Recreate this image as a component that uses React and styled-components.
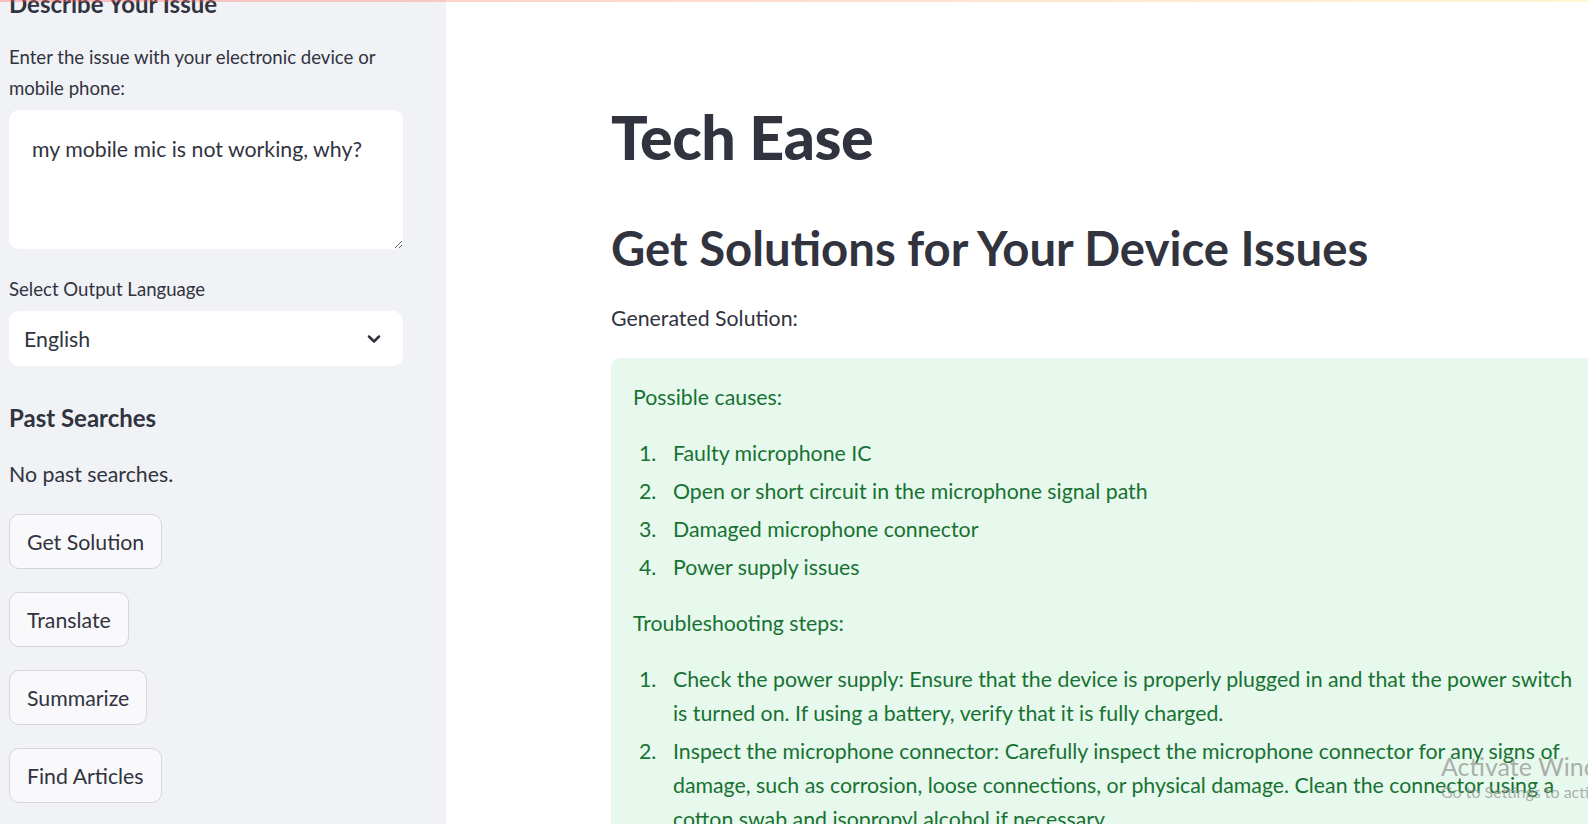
import React from 'react';
import styled, { createGlobalStyle } from 'styled-components';

const GlobalStyle = createGlobalStyle`
    html, body {
        margin: 0;
        padding: 0;
        overflow: hidden;
        background: #ffffff;
    }
    body {
        font-family: Lato, "Noto Sans", sans-serif;
        color: #31333f;
    }
    * {
        box-sizing: border-box;
    }
`;

const BODY = 21.3;

const Shell = styled.div`
    display: flex;
    height: 100vh;
    width: 100vw;
    position: relative;
    overflow: hidden;
`;

const Decoration = styled.div`
    position: absolute;
    top: 0;
    left: 0;
    right: 0;
    height: 2px;
    background: linear-gradient(90deg, rgba(255, 90, 90, 0.35), rgba(255, 230, 130, 0.35));
    z-index: 5;
`;

const Sidebar = styled.aside`
    width: 446px;
    flex-shrink: 0;
    background: #f0f2f6;
    padding: 0 43px 0 9px;
    overflow: hidden;
`;

const SidebarScroll = styled.div`
    display: flex;
    flex-direction: column;
    margin-top: -13px;
`;

const SideHeading = styled.h3`
    margin: ${p => p.$gap || 0}px 0 0;
    font-size: 24px;
    line-height: 34px;
    font-weight: 700;
    color: #31333f;
`;

const Label = styled.label`
    display: block;
    font-size: 18.6px;
    line-height: 31px;
    color: #31333f;
    margin-top: ${p => p.$gap || 0}px;
`;

const TextArea = styled.textarea`
    display: block;
    width: 394px;
    height: 139px;
    margin-top: 6px;
    border: none;
    border-radius: 10px;
    background: #ffffff;
    padding: 22px 23px;
    font-family: Lato, "Noto Sans", sans-serif;
    font-size: ${BODY}px;
    line-height: 34px;
    color: #31333f;
    resize: vertical;
    outline: none;
`;

const SelectBox = styled.div`
    display: flex;
    align-items: center;
    justify-content: space-between;
    width: 394px;
    height: 55px;
    margin-top: 6px;
    background: #ffffff;
    border-radius: 10px;
    padding: 0 19px 0 15px;
    font-size: ${BODY}px;
    color: #31333f;
`;

const Chevron = styled.svg`
    width: 20px;
    height: 20px;
    color: #31333f;
`;

const Note = styled.p`
    margin: 22px 0 0;
    font-size: ${BODY}px;
    line-height: 34px;
    color: #31333f;
`;

const ButtonStack = styled.div`
    display: flex;
    flex-direction: column;
    align-items: flex-start;
    gap: 23px;
    margin-top: 23px;
`;

const SideButton = styled.button`
    height: 55px;
    padding: 0 17px;
    background: #f9f9fb;
    border: 1px solid #d5d6da;
    border-radius: 10px;
    font-family: Lato, "Noto Sans", sans-serif;
    font-size: ${BODY}px;
    color: #31333f;
    cursor: pointer;
`;

const Main = styled.main`
    flex: 1;
    padding: 100px 0 0 165px;
    overflow: hidden;
`;

const Title = styled.h1`
    margin: 0;
    font-size: 61px;
    line-height: 74px;
    font-weight: 900;
    color: #31333f;
    letter-spacing: -0.5px;
`;

const Subtitle = styled.h2`
    margin: 46px 0 0;
    font-size: 47.3px;
    line-height: 56px;
    font-weight: 700;
    color: #31333f;
    white-space: nowrap;
`;

const Caption = styled.p`
    margin: 25px 0 0;
    font-size: ${BODY}px;
    line-height: 34px;
    color: #31333f;
`;

const SuccessBox = styled.div`
    width: 990px;
    margin-top: 23px;
    padding: 22px 22px 40px;
    background: #e7f8ec;
    border-radius: 10px;
    color: #177233;
    font-size: ${BODY}px;
    line-height: 34px;
`;

const BoxPara = styled.p`
    margin: ${p => p.$gap || 0}px 0 0;
`;

const Steps = styled.ol`
    margin: 22px 0 0;
    padding-left: 6px;
    list-style: none;
    counter-reset: step;
`;

const Step = styled.li`
    display: grid;
    grid-template-columns: 34px 1fr;
    margin-top: 4px;
    counter-increment: step;
    &:first-child {
        margin-top: 0;
    }
    &::before {
        content: counter(step) ".";
    }
`;

const Watermark = styled.div`
    position: absolute;
    left: 1441px;
    top: 750px;
    color: rgba(150, 150, 150, 0.75);
    white-space: nowrap;
    pointer-events: none;
    z-index: 6;
`;

const WatermarkTitle = styled.div`
    font-size: 25px;
    line-height: 32px;
`;

const WatermarkSub = styled.div`
    font-size: 16px;
    line-height: 20px;
`;

const causes = [
    'Faulty microphone IC',
    'Open or short circuit in the microphone signal path',
    'Damaged microphone connector',
    'Power supply issues',
];

const steps = [
    'Check the power supply: Ensure that the device is properly plugged in and that the power switch is turned on. If using a battery, verify that it is fully charged.',
    'Inspect the microphone connector: Carefully inspect the microphone connector for any signs of damage, such as corrosion, loose connections, or physical damage. Clean the connector using a cotton swab and isopropyl alcohol if necessary.',
];

const actions = ['Get Solution', 'Translate', 'Summarize', 'Find Articles'];

export default function App() {
    return (
        <Shell>
            <GlobalStyle />
            <Decoration />
            <Sidebar>
                <SidebarScroll>
                    <SideHeading>Describe Your Issue</SideHeading>
                    <Label $gap={21}>Enter the issue with your electronic device or mobile phone:</Label>
                    <TextArea readOnly value="my mobile mic is not working, why?" />
                    <Label $gap={25}>Select Output Language</Label>
                    <SelectBox>
                        <span>English</span>
                        <Chevron viewBox="0 0 24 24" fill="none" stroke="currentColor" strokeWidth="3" strokeLinecap="round" strokeLinejoin="round">
                            <polyline points="6 9 12 15 18 9" />
                        </Chevron>
                    </SelectBox>
                    <SideHeading $gap={35}>Past Searches</SideHeading>
                    <Note>No past searches.</Note>
                    <ButtonStack>
                        {actions.map(a => <SideButton key={a}>{a}</SideButton>)}
                    </ButtonStack>
                </SidebarScroll>
            </Sidebar>
            <Main>
                <Title>Tech Ease</Title>
                <Subtitle>Get Solutions for Your Device Issues</Subtitle>
                <Caption>Generated Solution:</Caption>
                <SuccessBox>
                    <BoxPara>Possible causes:</BoxPara>
                    <Steps>
                        {causes.map(c => <Step key={c}>{c}</Step>)}
                    </Steps>
                    <BoxPara $gap={22}>Troubleshooting steps:</BoxPara>
                    <Steps>
                        {steps.map(s => <Step key={s}>{s}</Step>)}
                    </Steps>
                </SuccessBox>
            </Main>
            <Watermark>
                <WatermarkTitle>Activate Windows</WatermarkTitle>
                <WatermarkSub>Go to Settings to activate Windows.</WatermarkSub>
            </Watermark>
        </Shell>
    );
}
